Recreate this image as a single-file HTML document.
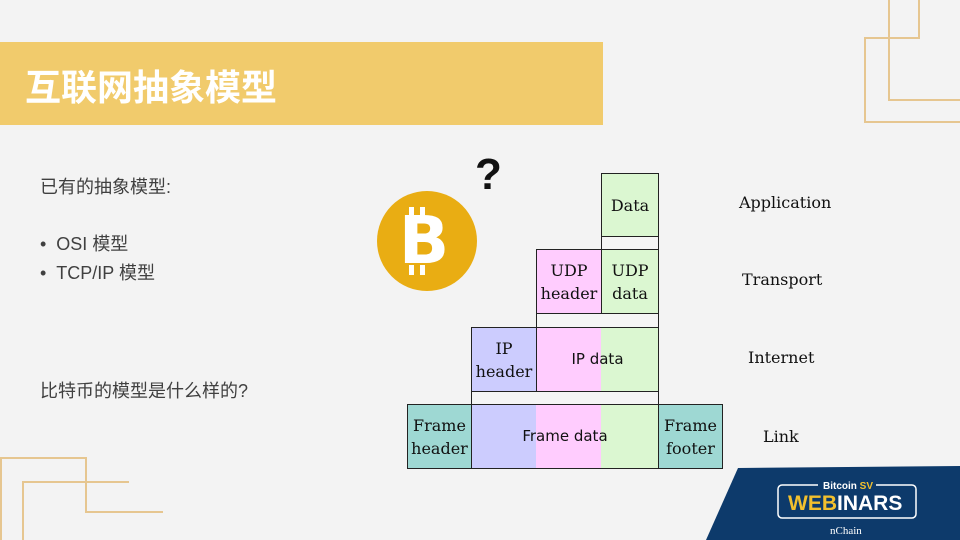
<!DOCTYPE html>
<html><head><meta charset="utf-8"><style>
*{margin:0;padding:0;box-sizing:border-box}
body{width:960px;height:540px;position:relative;overflow:hidden;background:#f3f3f3;font-family:"Liberation Sans","Noto Sans CJK SC",sans-serif}
.a{position:absolute}
.l{position:absolute;background:#e6c690}
.t{position:absolute;color:#404040;font-size:18px;white-space:nowrap;line-height:24px}
.c{position:absolute;border:1.5px solid #222;display:flex;align-items:center;justify-content:center;text-align:center;font-family:"DejaVu Serif","Liberation Serif",serif;font-size:16px;line-height:23px;color:#111}
.s{font-family:"DejaVu Sans",sans-serif;font-size:15px}
.r{position:absolute;font-family:"DejaVu Serif","Liberation Serif",serif;font-size:16px;color:#111}
</style></head><body>
<div class="a" style="left:0;top:42px;width:603px;height:83px;background:#f1cb6c"></div>
<div class="a" style="left:25px;top:66px;font-size:36px;font-weight:bold;color:#fff;line-height:44px;letter-spacing:0px">互联网抽象模型</div>
<div class="l" style="left:918px;top:0;width:2px;height:37px"></div>
<div class="l" style="left:864px;top:37px;width:56px;height:2px"></div>
<div class="l" style="left:864px;top:37px;width:2px;height:86px"></div>
<div class="l" style="left:864px;top:121px;width:96px;height:2px"></div>
<div class="l" style="left:888px;top:0;width:2px;height:100px"></div>
<div class="l" style="left:888px;top:99px;width:72px;height:2px"></div>
<div class="l" style="left:0;top:457px;width:86px;height:2px"></div>
<div class="l" style="left:0;top:457px;width:2px;height:83px"></div>
<div class="l" style="left:85px;top:457px;width:2px;height:56px"></div>
<div class="l" style="left:85px;top:511px;width:78px;height:2px"></div>
<div class="l" style="left:22px;top:481px;width:107px;height:2px"></div>
<div class="l" style="left:22px;top:481px;width:2px;height:59px"></div>
<div class="t" style="left:40px;top:175px">已有的抽象模型:</div>
<div class="t" style="left:40px;top:232px">•&nbsp;&nbsp;OSI 模型</div>
<div class="t" style="left:40px;top:261px">•&nbsp;&nbsp;TCP/IP 模型</div>
<div class="t" style="left:40px;top:379px">比特币的模型是什么样的?</div>
<div class="a" style="left:377px;top:191px;width:100px;height:100px;border-radius:50%;background:#e9ad13"></div>
<div class="a" style="left:374px;top:191px;width:100px;height:100px;color:#fff;font-size:66px;font-weight:900;text-align:center;line-height:100px;font-family:'DejaVu Sans',sans-serif">B</div>
<div class="a" style="left:409px;top:207px;width:5px;height:10px;background:#fff"></div>
<div class="a" style="left:420px;top:207px;width:5px;height:10px;background:#fff"></div>
<div class="a" style="left:409px;top:265px;width:5px;height:10px;background:#fff"></div>
<div class="a" style="left:420px;top:265px;width:5px;height:10px;background:#fff"></div>
<div class="a" style="left:475px;top:150px;font-size:44px;font-weight:bold;color:#111;line-height:50px;font-family:'Liberation Sans Narrow','Liberation Sans',sans-serif">?</div>
<div class="c" style="left:601px;top:173px;width:58px;height:65px;background:#dbf7d1">Data</div>
<div class="c" style="left:601px;top:236px;width:58px;height:14px;background:#f5f5f5"></div>
<div class="c" style="left:536px;top:249px;width:66px;height:65px;background:#ffccfe">UDP<br>header</div>
<div class="c" style="left:601px;top:249px;width:58px;height:65px;background:#dbf7d1">UDP<br>data</div>
<div class="c" style="left:536px;top:313px;width:123px;height:15px;background:#f5f5f5"></div>
<div class="a" style="left:536px;top:327px;width:65px;height:65px;background:#ffccfe"></div>
<div class="a" style="left:601px;top:327px;width:58px;height:65px;background:#dbf7d1"></div>
<div class="c" style="left:471px;top:327px;width:66px;height:65px;background:#ccccfe">IP<br>header</div>
<div class="c s" style="left:536px;top:327px;width:123px;height:65px">IP data</div>
<div class="c" style="left:471px;top:391px;width:188px;height:14px;background:#f5f5f5"></div>
<div class="a" style="left:471px;top:404px;width:65px;height:65px;background:#ccccfe"></div>
<div class="a" style="left:536px;top:404px;width:65px;height:65px;background:#ffccfe"></div>
<div class="a" style="left:601px;top:404px;width:58px;height:65px;background:#dbf7d1"></div>
<div class="c" style="left:407px;top:404px;width:65px;height:65px;background:#9ed8d3">Frame<br>header</div>
<div class="c s" style="left:471px;top:404px;width:188px;height:65px">Frame data</div>
<div class="c" style="left:658px;top:404px;width:65px;height:65px;background:#9ed8d3">Frame<br>footer</div>
<div class="r" style="left:739px;top:193px">Application</div>
<div class="r" style="left:742px;top:270px">Transport</div>
<div class="r" style="left:748px;top:348px">Internet</div>
<div class="r" style="left:763px;top:427px">Link</div>
<svg class="a" style="left:700px;top:464px" width="260" height="76"><polygon points="38,4 260,2 260,76 6,76" fill="#0d3a6b"/>
<rect x="78" y="21" width="138" height="33" rx="4" fill="none" stroke="#fff" stroke-width="1.5"/>
<rect x="118" y="15" width="58" height="12" fill="#0d3a6b"/>
<text x="123" y="25" font-family="Liberation Sans" font-weight="bold" font-size="10" fill="#fff">Bitcoin <tspan fill="#f2c02e">SV</tspan></text>
<text x="88" y="46" font-family="Liberation Sans" font-weight="bold" font-size="21" fill="#fff"><tspan fill="#f2c02e">WEB</tspan>INARS</text>
<text x="130" y="70" font-family="Liberation Serif" font-size="11" fill="#fff">nChain</text></svg>
</body></html>
